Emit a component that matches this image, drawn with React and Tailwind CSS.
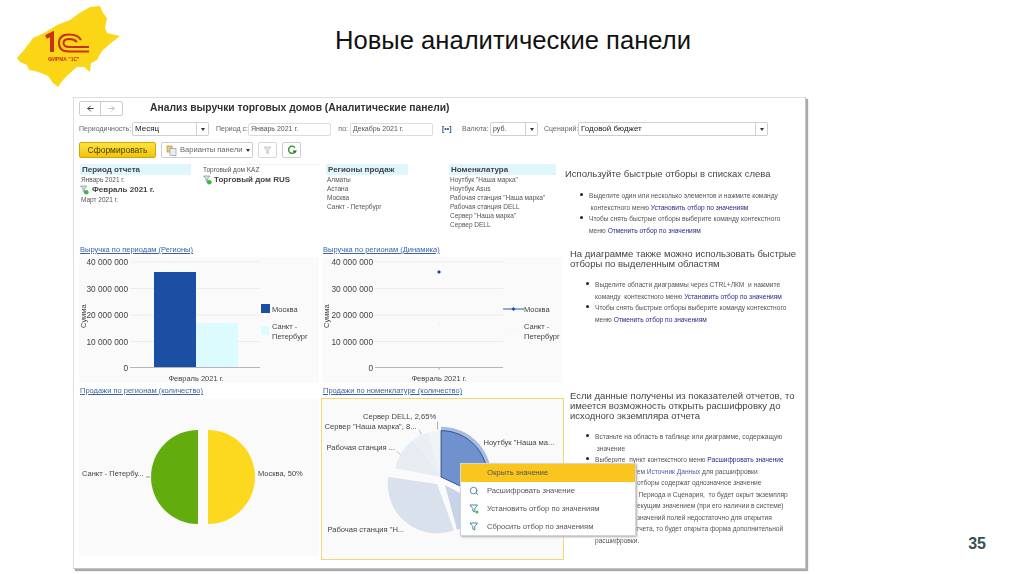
import React from 'react'
import { ArrowLeft, ArrowRight, Search } from 'lucide-react'

// polar helper, angle is clockwise from the top
const pt = (cx, cy, r, a) => {
  const rad = (a * Math.PI) / 180
  return [cx + r * Math.sin(rad), cy - r * Math.cos(rad)]
}

const wedge = (cx, cy, r, a1, a2) => {
  const [x1, y1] = pt(cx, cy, r, a1)
  const [x2, y2] = pt(cx, cy, r, a2)
  const large = a2 - a1 > 180 ? 1 : 0
  return `M${cx} ${cy}L${x1} ${y1}A${r} ${r} 0 ${large} 1 ${x2} ${y2}Z`
}

const Logo = () => (
  <svg width="130" height="92" viewBox="0 0 130 92" className="shrink-0 blur-[0.3px]">
    <path
      d="M17 58L24 50L33 38L44 33L57 25L70 20L78 14L90 7L100 6L103 13L107 18L105 28L107 33L120 36L111 43L103 50L100 54L97 60L91 63L90 72L84 67L77 67L70 73L63 80L58 87L53 83L48 76L41 73L35 71L29 70L27 65L20 62Z"
      fill="#fbd617"
    />
    <g fill="none" stroke="#c9301c">
      <path d="M46 37L52 34V52" strokeWidth="4" />
      <path d="M81 40C79 36 74 34.500 69 34.500C62 34.500 59 38 59 43C59 48 62 51.500 69 51.500H89" strokeWidth="2" />
      <path d="M77 42C75 40 73 39 69.500 39C65.500 39 63.500 40.500 63.500 43C63.500 45.500 65.500 47 69.500 47H89" strokeWidth="2" />
    </g>
    <text x="48" y="61" fontFamily="Liberation Sans" fontSize="5" fontWeight="700" fill="#c9301c">ФИРМА "1С"</text>
  </svg>
)

const Caret = () => (
  <span className="block w-0 h-0 border-x-[2px] border-x-transparent border-t-[3px] border-t-[#333]" />
)

const Select = ({ w, text, bold }) => (
  <div className={`${w} h-[14px] flex items-center border border-[#cfcfcf] rounded-[2px] bg-white`}>
    <span className={`flex-1 pl-[2px] truncate ${bold ? 'text-[8px] text-[#222]' : 'text-[7px] text-[#444]'}`}>{text}</span>
    <span className="w-[12px] h-full flex items-center justify-center border-l border-[#cfcfcf]">
      <Caret />
    </span>
  </div>
)

const Input = ({ w, text }) => (
  <div className={`${w} h-[13px] flex items-center pl-[2px] border border-[#dcdcdc] rounded-[2px] text-[7px] text-[#555] bg-white`}>
    {text}
  </div>
)

const Label = ({ w, text }) => <span className={`${w} text-[7px] text-[#666] text-right whitespace-nowrap`}>{text}</span>

const FilterMark = () => (
  <svg width="9" height="10" viewBox="0 0 9 10" className="shrink-0">
    <path d="M0.500 1H7L4.500 4V7.500L3 6.500V4Z" fill="#d6dfe0" stroke="#7f9a96" strokeWidth="0.700" />
    <circle cx="6.300" cy="7.200" r="2.300" fill="#3fb83a" />
  </svg>
)

const ListColumn = ({ w, ml, title, items }) => (
  <div className={`${w} ${ml} shrink-0`}>
    <div className="h-[11px] pl-[2px] bg-[#dff6fa] text-[8px] leading-[11px] font-bold text-[#444]">{title}</div>
    {items.map((item) => (
      <div key={item} className="h-[9px] pl-[1px] text-[6.500px] leading-[9px] text-[#555] whitespace-nowrap">{item}</div>
    ))}
  </div>
)

const ChartLink = ({ w, ml, text }) => (
  <a className={`${w} ${ml} block text-[7.500px] leading-[10px] text-[#3a62a8] underline whitespace-nowrap`}>{text}</a>
)

const axisFont = { fontFamily: 'Liberation Sans', fontSize: 8.3, fill: '#444' }

const Axis = ({ left, right, x0 }) => (
  <>
    {[
      [262, '40 000 000'],
      [288.500, '30 000 000'],
      [315, '20 000 000'],
      [341.500, '10 000 000'],
      [367.500, '0'],
    ].map(([y, t]) => (
      <g key={t}>
        <line x1={left} x2={right} y1={y} y2={y} stroke={t === '0' ? '#b5b5b5' : '#ececec'} />
        <text x={left - 2} y={y + 3} textAnchor="end" {...axisFont}>{t}</text>
      </g>
    ))}
    <text transform={`translate(${x0} 328) rotate(-90)`} {...axisFont} fontSize="7.500">Сумма</text>
  </>
)

const BarChart = () => (
  <svg width="240" height="126" viewBox="79 257 240 126" className="block bg-[#fafafa]">
    <Axis left={130} right={260} x0={86} />
    <rect x="154" y="272" width="42" height="95" fill="#1a4fa3" />
    <rect x="196" y="323" width="42" height="44" fill="#dbfbff" />
    <text x="196" y="381" textAnchor="middle" {...axisFont} fontSize="7.500">Февраль 2021 г.</text>
    <rect x="261" y="304" width="9" height="9" fill="#1a4fa3" />
    <rect x="261" y="326" width="8" height="9" fill="#dbfbff" />
    <text x="272" y="312" {...axisFont} fontSize="7.500">Москва</text>
    <text x="272" y="329" {...axisFont} fontSize="7.500">Санкт -</text>
    <text x="272" y="339" {...axisFont} fontSize="7.500">Петербург</text>
  </svg>
)

const LineChart = () => (
  <svg width="240" height="126" viewBox="322 257 240 126" className="block bg-[#fafafa]">
    <Axis left={375} right={503} x0={329} />
    <line x1="439" x2="439" y1="367" y2="370" stroke="#b5b5b5" />
    <path d="M439 270L441 272L439 274L437 272Z" fill="#1a4fa3" />
    <path d="M439 321L441 323L439 325L437 323Z" fill="#e3fbfd" />
    <line x1="503" x2="524" y1="309" y2="309" stroke="#2c5aa8" />
    <path d="M513.500 307L515.500 309L513.500 311L511.500 309Z" fill="#1a4fa3" />
    <line x1="508" x2="522" y1="330" y2="330" stroke="#e3fbfd" />
    <text x="524" y="312" {...axisFont} fontSize="7.500">Москва</text>
    <text x="524" y="329" {...axisFont} fontSize="7.500">Санкт -</text>
    <text x="524" y="339" {...axisFont} fontSize="7.500">Петербург</text>
    <text x="439" y="381" textAnchor="middle" {...axisFont} fontSize="7.500">Февраль 2021 г.</text>
  </svg>
)

const RegionPie = () => (
  <svg width="240" height="157" viewBox="79 399 240 157" className="block bg-[#fafafa]">
    <path d={wedge(198, 477, 47, 180, 360)} fill="#62ac0e" />
    <path d={wedge(208, 477, 47, 0, 180)} fill="#fcd91f" />
    <text x="82" y="476" {...axisFont} fontSize="7.500">Санкт - Петербу...</text>
    <line x1="146" x2="150" y1="477" y2="477" stroke="#999" />
    <text x="258" y="476" {...axisFont} fontSize="7.500">Москва, 50%</text>
  </svg>
)

const NomenclaturePie = () => (
  <svg width="243" height="162" viewBox="321 398 243 162" className="block bg-[#fafafa] border-[1.5px] border-[#f5d76e]">
    <path d={wedge(441, 477, 51, 0, 115)} fill="#a8bcdf" />
    <path d={wedge(445, 485, 47, 118, 165)} fill="#c7d4e7" />
    <path d={wedge(437, 484, 50, 160, 278)} fill="#d8e1ec" />
    <path d={wedge(441, 477, 47, 281, 323)} fill="#e6ecf2" />
    <path d={wedge(441, 477, 47, 323, 344)} fill="#e9eff3" />
    <path d={wedge(441, 477, 47, 344, 360)} fill="#f1f4f7" />
    <path d={wedge(441, 477, 47, 0, 115)} fill="#6f92cf" stroke="#1f3f87" strokeWidth="0.800" />
    <line x1="437.500" x2="437.500" y1="421" y2="429" stroke="#777" strokeWidth="0.600" />
    <line x1="419" x2="421" y1="429" y2="434" stroke="#999" strokeWidth="0.600" />
    <line x1="396" x2="400" y1="451" y2="454" stroke="#999" strokeWidth="0.600" />
    <text x="362" y="418" {...axisFont} fontSize="7.700">Сервер DELL, 2,65%</text>
    <text x="323" y="428" {...axisFont} fontSize="7.700">Сервер "Наша марка", 8...</text>
    <text x="325" y="450" {...axisFont} fontSize="7.700">Рабочая станция ...</text>
    <text x="484" y="445" {...axisFont} fontSize="7.700">Ноутбук "Наша ма...</text>
    <text x="326" y="533" {...axisFont} fontSize="7.700">Рабочая станция "Н...</text>
  </svg>
)

const Heading = ({ ml, children }) => (
  <h2 className={`${ml} text-[9.500px] leading-[10px] font-normal text-[#444]`}>{children}</h2>
)

const Bullet = ({ children, plain }) => (
  <li className="relative text-[6.600px] leading-[11.500px] text-[#555]">
    {!plain && <span className="absolute -left-[9px] top-[3px] w-[3px] h-[3px] rounded-full bg-[#222]" />}
    {children}
  </li>
)

const Strong = ({ children }) => <span className="text-[#27288c]">{children}</span>

const MenuItem = ({ icon, text, active }) => (
  <div className={`h-[18px] flex items-center text-[7.600px] text-[#555] ${active ? 'bg-[#fac61e] text-[#5a4a10]' : ''}`}>
    <span className="w-[26px] flex justify-center">{icon}</span>
    {text}
  </div>
)

const MenuFilter = ({ dot }) => (
  <svg width="10" height="10" viewBox="0 0 10 10">
    <path d="M1 1H8.500L5.800 4.500V8L3.800 7V4.500Z" fill="none" stroke="#2f7d95" strokeWidth="0.900" />
    {dot && <circle cx="8" cy="8" r="1.500" fill="#3fc04a" />}
  </svg>
)

const Window = () => (
  <div className="relative w-[733px] h-[472px] ml-[73px] bg-white border border-[#dedede] border-r-[#c4c4c4] border-b-[#c4c4c4] shadow-[2px_2px_1px_#a9a9a9] font-['Liberation_Sans',sans-serif] blur-[0.45px]">
    {/* title row */}
    <div className="flex items-center h-[15px] mt-[3px] ml-[5px]">
      <div className="w-[44px] h-[15px] flex border border-[#cdcdcd] rounded-[2px]">
        <span className="w-[22px] flex items-center justify-center border-r border-[#cdcdcd]">
          <ArrowLeft size={9} strokeWidth={2.500} color="#333" />
        </span>
        <span className="w-[22px] flex items-center justify-center">
          <ArrowRight size={9} strokeWidth={2} color="#aaa" />
        </span>
      </div>
      <h1 className="ml-[27px] -mt-[1px] text-[10.300px] font-bold text-[#333] whitespace-nowrap">Анализ выручки торговых домов (Аналитические панели)</h1>
    </div>

    {/* parameters */}
    <div className="flex items-center h-[14px] mt-[6px] ml-[5px]">
      <Label w="w-[49px]" text="Периодичность:" />
      <span className="w-[4px]" />
      <Select w="w-[77px]" text="Месяц" bold />
      <span className="w-[7px]" />
      <Label w="w-[29px]" text="Период с:" />
      <span className="w-[3px]" />
      <Input w="w-[83px]" text="Январь 2021 г." />
      <span className="w-[7px]" />
      <Label w="w-[10px]" text="по:" />
      <span className="w-[2px]" />
      <Input w="w-[83px]" text="Декабрь 2021 г." />
      <span className="w-[10px] ml-[9px] mr-[10px] text-[7px] font-bold text-[#2a4a8a] whitespace-nowrap">[••]</span>
      <Label w="w-[25px]" text="Валюта:" />
      <span className="w-[3px]" />
      <Select w="w-[48px]" text="руб." />
      <span className="w-[6px]" />
      <Label w="w-[32px]" text="Сценарий:" />
      <span className="w-[2px]" />
      <Select w="w-[190px]" text="Годовой бюджет" bold />
    </div>

    {/* actions */}
    <div className="flex items-center h-[16px] mt-[6px] ml-[5px]">
      <button className="w-[77px] h-[16px] bg-gradient-to-b from-[#ffe33f] to-[#f0c400] border border-[#cfa800] rounded-[2px] text-[8.500px] text-[#4a4200]">Сформировать</button>
      <button className="w-[92px] h-[16px] ml-[5px] flex items-center border border-[#cdcdcd] rounded-[2px] text-[7.600px] text-[#666] whitespace-nowrap">
        <svg width="11" height="11" viewBox="0 0 11 11" className="ml-[4px] mr-[3px] shrink-0">
          <rect x="1" y="1" width="5" height="6" fill="#f3c777" stroke="#c9882a" strokeWidth="0.700" />
          <rect x="4" y="3.500" width="6" height="7" fill="#e8eef2" stroke="#8aa0a8" strokeWidth="0.700" />
        </svg>
        Варианты панели
        <span className="ml-[4px]"><Caret /></span>
      </button>
      <button className="w-[19px] h-[16px] ml-[5px] flex items-center justify-center border border-[#d8d8d8] rounded-[2px]">
        <svg width="9" height="9" viewBox="0 0 9 9"><path d="M1 1H8L5.300 4.500V8L3.700 7V4.500Z" fill="#e4e4e4" stroke="#bbb" strokeWidth="0.700" /></svg>
      </button>
      <button className="w-[19px] h-[16px] ml-[5px] flex items-center justify-center border border-[#cdcdcd] rounded-[2px]">
        <svg width="10" height="10" viewBox="0 0 10 10">
          <path d="M8 2.500A3.600 3.600 0 1 0 8.300 6.500" fill="none" stroke="#3c9a35" strokeWidth="1.500" />
          <path d="M5.500 5.500H10L7.800 8.500Z" fill="#2c6d28" />
        </svg>
      </button>
    </div>

    <div className="flex mt-[6px] ml-[6px]">
      <div className="w-[485px] shrink-0">
        {/* quick filter lists */}
        <div className="flex h-[81px]">
          <div className="w-[111px] shrink-0">
            <div className="h-[11px] pl-[2px] bg-[#dff6fa] text-[8px] leading-[11px] font-bold text-[#444]">Период отчета</div>
            <div className="h-[9px] pl-[1px] text-[6.500px] leading-[9px] text-[#555]">Январь 2021 г.</div>
            <div className="h-[11px] flex items-center gap-[3px] text-[8px] font-bold text-[#444]"><FilterMark />Февраль 2021 г.</div>
            <div className="h-[9px] pl-[1px] text-[6.500px] leading-[9px] text-[#555]">Март 2021 г.</div>
          </div>
          <div className="w-[117px] ml-[12px] shrink-0 border-t border-[#e8f5f7]">
            <div className="h-[9px] text-[6.500px] leading-[9px] text-[#555]">Торговый дом KAZ</div>
            <div className="h-[11px] flex items-center gap-[2px] text-[8px] font-bold text-[#444]"><FilterMark />Торговый дом RUS</div>
          </div>
          <ListColumn w="w-[82px]" ml="ml-[6px]" title="Регионы продаж" items={['Алматы', 'Астана', 'Москва', 'Санкт - Петербург']} />
          <ListColumn w="w-[107px]" ml="ml-[41px]" title="Номенклатура" items={['Ноутбук "Наша марка"', 'Ноутбук Asus', 'Рабочая станция "Наша марка"', 'Рабочая станция DELL', 'Сервер "Наша марка"', 'Сервер DELL']} />
        </div>

        {/* charts */}
        <div className="flex h-[10px]">
          <ChartLink w="w-[243px]" text="Выручка по периодам (Регионы)" />
          <ChartLink text="Выручка по регионам (Динамика)" />
        </div>
        <div className="flex mt-[2px] -ml-[1px]">
          <BarChart />
          <span className="w-[3px]" />
          <LineChart />
        </div>
        <div className="flex h-[10px] mt-[3px]">
          <ChartLink w="w-[243px]" text="Продажи по регионам (количество)" />
          <ChartLink text="Продажи по номенклатуре (количество)" />
        </div>
        <div className="flex mt-[2px] -ml-[1px]">
          <div className="pt-[1px]"><RegionPie /></div>
          <span className="w-[2px]" />
          <NomenclaturePie />
        </div>
      </div>

      {/* help text */}
      <div className="pt-[5px] whitespace-nowrap">
        <Heading>Используйте быстрые отборы в списках слева</Heading>
        <ul className="ml-[24px] mt-[11px]">
          <Bullet>Выделите один или несколько элементов и нажмите команду</Bullet>
          <Bullet plain>&nbsp;контекстного меню <Strong>Установить отбор по значениям</Strong></Bullet>
          <Bullet>Чтобы снять быстрые отборы выберите команду контекстного</Bullet>
          <Bullet plain>меню <Strong>Отменить отбор по значениям</Strong></Bullet>
        </ul>
        <div className="mt-[13px]">
          <Heading ml="ml-[5px]">На диаграмме также можно использовать быстрые<br />отборы по выделенным областям</Heading>
        </div>
        <ul className="ml-[30px] mt-[10px]">
          <Bullet>Выделите области диаграммы через CTRL+ЛКМ&nbsp; и нажмите</Bullet>
          <Bullet plain>команду&nbsp; контекстного меню <Strong>Установить отбор по значениям</Strong></Bullet>
          <Bullet>Чтобы снять быстрые отборы выберите команду контекстного</Bullet>
          <Bullet plain>меню <Strong>Отменить отбор по значениям</Strong></Bullet>
        </ul>
        <div className="mt-[66px]">
          <Heading ml="ml-[5px]">Если данные получены из показателей отчетов, то<br />имеется возможность открыть расшифровку до<br />исходного экземпляра отчета</Heading>
        </div>
        <ul className="ml-[30px] mt-[10px]">
          <Bullet>Встаньте на область в таблице или диаграмме, содержащую</Bullet>
          <Bullet plain>&nbsp;значение</Bullet>
          <Bullet>Выберите&nbsp; пункт контекстного меню <Strong>Расшифровать значение</Strong></Bullet>
          <Bullet plain>Выберите затем <span className="text-[#4a5fae]">Источник Данных</span> для расшифровки</Bullet>
          <Bullet plain>Если данные отборы содержат однозначное значение</Bullet>
          <Bullet plain>Организации, Периода и Сценария,&nbsp; то будет окрыт экземпляр</Bullet>
          <Bullet plain>экземпляр с текущим значением (при его наличии в системе)</Bullet>
          <Bullet plain>Если нужных значений полей недостаточно для открытия</Bullet>
          <Bullet plain>экземпляра отчета, то будет открыта форма дополнительной</Bullet>
          <Bullet plain>расшифровки.</Bullet>
        </ul>
      </div>
    </div>

    {/* context menu over the chart */}
    <div className="absolute left-[386px] top-[365px] w-[176px] h-[73px] bg-white border border-[#d5d5d5] shadow-[1px_1px_2px_#aaa]">
      <MenuItem active text="Окрыть значение" />
      <MenuItem icon={<Search size={10} color="#2f7d95" />} text="Расшифровать значение" />
      <MenuItem icon={<MenuFilter dot />} text="Установить отбор по значениям" />
      <MenuItem icon={<MenuFilter />} text="Сбросить отбор по значениям" />
    </div>
  </div>
)

export default function App() {
  return (
    <div className="w-[1024px] h-[574px] overflow-hidden bg-white font-['Liberation_Sans',sans-serif]">
      <header className="h-[97px] flex">
        <Logo />
        <h1 className="w-[766px] pt-[26px] text-center text-[25.600px] leading-[28px] text-[#111]">Новые аналитические панели</h1>
      </header>
      <div className="flex">
        <Window />
        <div className="flex-1 flex items-end justify-end pr-[38px] pb-[16px]">
          <span className="text-[16px] leading-[18px] font-bold text-[#37505a]">35</span>
        </div>
      </div>
    </div>
  )
}
